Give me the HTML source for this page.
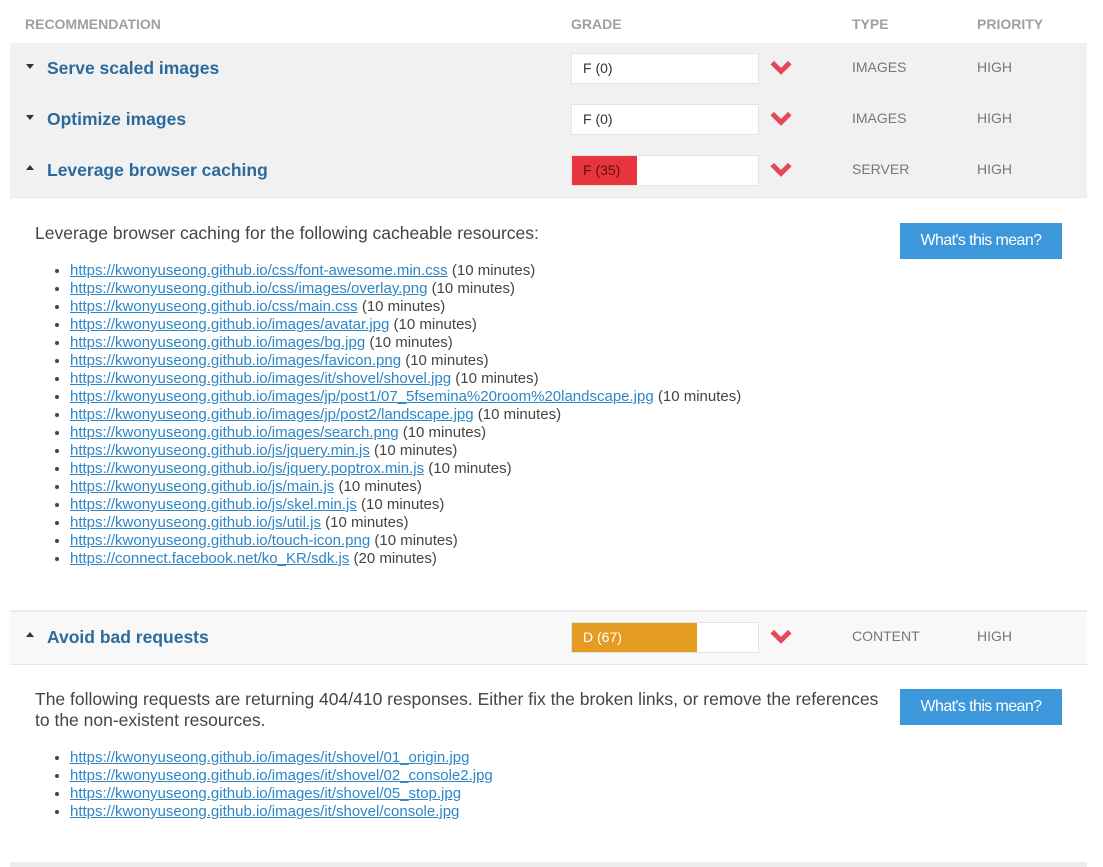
<!DOCTYPE html><html><head><style>
body{margin:0;background:#fff;font-family:"Liberation Sans",Arial,sans-serif;width:1103px;height:867px;overflow:hidden;position:relative}
.a{position:absolute}
.h{top:16px;font-size:14px;font-weight:bold;color:#a0a0a0}
.row{left:10px;width:1077px;height:51px;background:#f1f1f1}
.t{left:37px;font-size:17.5px;font-weight:bold;color:#2b6a9b;top:15px}
.tri{left:16px;top:21px;width:0;height:0;border-left:4px solid transparent;border-right:4px solid transparent}
.dn{border-top:5px solid #333}.up{border-bottom:5px solid #333;top:20px}
.g{left:561px;top:10px;width:186px;height:29px;background:#fff;border:1px solid #e4e4e4;font-size:14px;color:#333}
.g span{display:block;height:29px;line-height:29px;padding-left:11px;box-sizing:border-box}
.ch{left:760px;top:16px}
.ty{left:842px;top:16px;font-size:14px;color:#777}
.pr{left:967px;top:16px;font-size:14px;color:#777}
.btn{left:900px;width:162px;height:36px;background:#3d97db;color:#fff;font-size:16px;line-height:36px;text-align:center;letter-spacing:-0.6px}
ul{position:absolute;left:52px;margin:0;padding-left:18px;font-size:15px;line-height:18px;color:#444}
ul a{color:#2d86c7;text-decoration:underline}
.p{left:35px;font-size:17.5px;color:#444;line-height:21px}
</style></head><body>
<div class="a h" style="left:25px">RECOMMENDATION</div>
<div class="a h" style="left:571px">GRADE</div>
<div class="a h" style="left:852px">TYPE</div>
<div class="a h" style="left:977px">PRIORITY</div>

<svg width="0" height="0" style="position:absolute"><defs><symbol id="c" viewBox="0 0 20 14"><path d="M2 3 L10 11 L18 3" stroke="#e5485a" stroke-width="4.5" fill="none" stroke-linejoin="miter"/></symbol></defs></svg>

<div class="a row" style="top:43px"><div class="a tri dn"></div><div class="a t">Serve scaled images</div>
<div class="a g"><span>F (0)</span></div><svg class="a ch" width="22" height="16"><use href="#c"/></svg><div class="a ty">IMAGES</div><div class="a pr">HIGH</div></div>
<div class="a row" style="top:94px"><div class="a tri dn"></div><div class="a t">Optimize images</div>
<div class="a g"><span>F (0)</span></div><svg class="a ch" width="22" height="16"><use href="#c"/></svg><div class="a ty">IMAGES</div><div class="a pr">HIGH</div></div>
<div class="a row" style="top:145px;height:52px;border-bottom:1px solid #e6e6e6"><div class="a tri up"></div><div class="a t">Leverage browser caching</div>
<div class="a g"><span style="width:65px;background:#e8343c;color:#5a1010">F (35)</span></div><svg class="a ch" width="22" height="16"><use href="#c"/></svg><div class="a ty">SERVER</div><div class="a pr">HIGH</div></div>

<div class="a p" style="top:223px">Leverage browser caching for the following cacheable resources:</div>
<div class="a btn" style="top:223px">What's this mean?</div>
<ul style="top:262px">
<li><a>https://kwonyuseong.github.io/css/font-awesome.min.css</a> (10 minutes)</li>
<li><a>https://kwonyuseong.github.io/css/images/overlay.png</a> (10 minutes)</li>
<li><a>https://kwonyuseong.github.io/css/main.css</a> (10 minutes)</li>
<li><a>https://kwonyuseong.github.io/images/avatar.jpg</a> (10 minutes)</li>
<li><a>https://kwonyuseong.github.io/images/bg.jpg</a> (10 minutes)</li>
<li><a>https://kwonyuseong.github.io/images/favicon.png</a> (10 minutes)</li>
<li><a>https://kwonyuseong.github.io/images/it/shovel/shovel.jpg</a> (10 minutes)</li>
<li><a>https://kwonyuseong.github.io/images/jp/post1/07_5fsemina%20room%20landscape.jpg</a> (10 minutes)</li>
<li><a>https://kwonyuseong.github.io/images/jp/post2/landscape.jpg</a> (10 minutes)</li>
<li><a>https://kwonyuseong.github.io/images/search.png</a> (10 minutes)</li>
<li><a>https://kwonyuseong.github.io/js/jquery.min.js</a> (10 minutes)</li>
<li><a>https://kwonyuseong.github.io/js/jquery.poptrox.min.js</a> (10 minutes)</li>
<li><a>https://kwonyuseong.github.io/js/main.js</a> (10 minutes)</li>
<li><a>https://kwonyuseong.github.io/js/skel.min.js</a> (10 minutes)</li>
<li><a>https://kwonyuseong.github.io/js/util.js</a> (10 minutes)</li>
<li><a>https://kwonyuseong.github.io/touch-icon.png</a> (10 minutes)</li>
<li><a>https://connect.facebook.net/ko_KR/sdk.js</a> (20 minutes)</li>
</ul>

<div class="a row" style="top:610px;height:52px;background:#f8f8f8;border-top:2px solid #ececec;border-bottom:1px solid #e6e6e6"><div class="a tri up"></div><div class="a t">Avoid bad requests</div>
<div class="a g"><span style="width:125px;background:#e39b22;color:#fff">D (67)</span></div><svg class="a ch" width="22" height="16"><use href="#c"/></svg><div class="a ty">CONTENT</div><div class="a pr">HIGH</div></div>

<div class="a p" style="top:689px;width:850px">The following requests are returning 404/410 responses. Either fix the broken links, or remove the references to the non-existent resources.</div>
<div class="a btn" style="top:689px">What's this mean?</div>
<ul style="top:749px">
<li><a>https://kwonyuseong.github.io/images/it/shovel/01_origin.jpg</a></li>
<li><a>https://kwonyuseong.github.io/images/it/shovel/02_console2.jpg</a></li>
<li><a>https://kwonyuseong.github.io/images/it/shovel/05_stop.jpg</a></li>
<li><a>https://kwonyuseong.github.io/images/it/shovel/console.jpg</a></li>
</ul>
<div class="a" style="left:10px;top:862px;width:1077px;height:5px;background:#ececec"></div>
</body></html>
